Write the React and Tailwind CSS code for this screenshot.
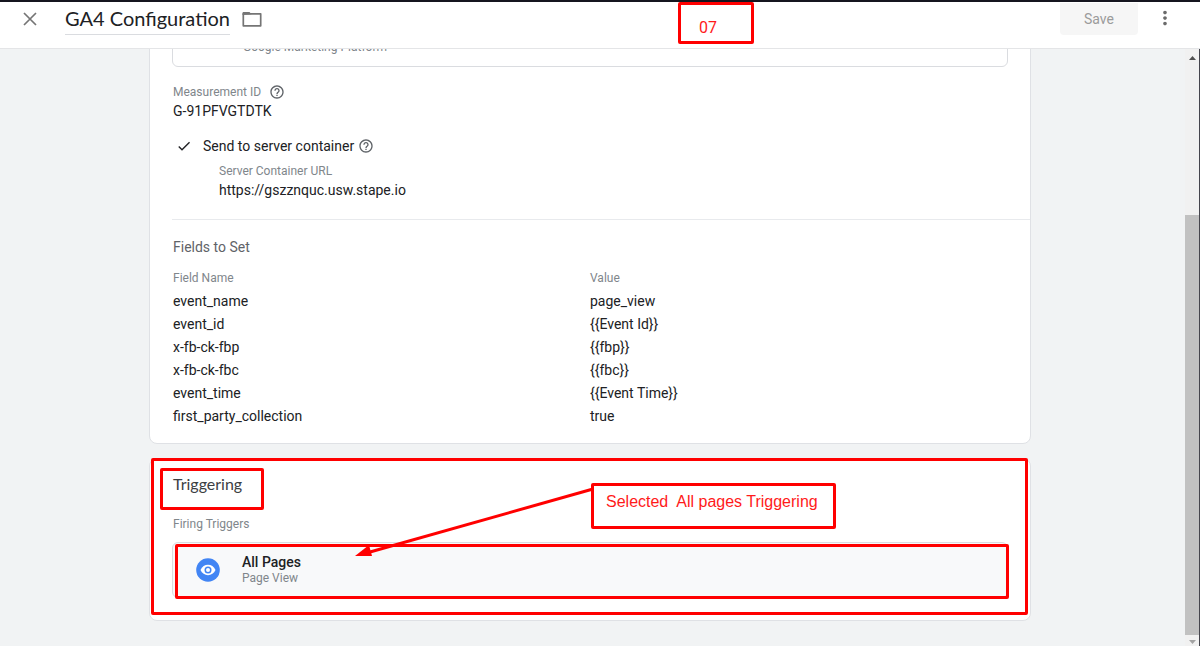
import { MdMoreVert, MdHelpOutline, MdCheck } from 'react-icons/md';

const fields = [
  { name: 'event_name', value: 'page_view' },
  { name: 'event_id', value: '{{Event Id}}' },
  { name: 'x-fb-ck-fbp', value: '{{fbp}}' },
  { name: 'x-fb-ck-fbc', value: '{{fbc}}' },
  { name: 'event_time', value: '{{Event Time}}' },
  { name: 'first_party_collection', value: 'true' },
];

const Header = () => (
  <header className="h-[49px] shrink-0 flex items-start bg-white border-t-2 border-t-[#15151f] border-b border-b-[#e4e5e7]">
    <button aria-label="Close" className="ml-5 mt-[7px] text-[#757575]">
      <svg viewBox="0 0 20 20" className="w-5 h-5" fill="none" stroke="currentColor" strokeWidth="1.700">
        <path d="M4 4l12 12M16 4L4 16" />
      </svg>
    </button>
    <h1 className="ml-[25px] h-[33px] leading-8 border-b border-[#dadce0] text-[20px] text-[#202124] font-['Lato',sans-serif]">GA4 Configuration</h1>
    <button aria-label="Move to folder" className="ml-[10px] mt-[6px] text-[#757575]">
      <svg viewBox="0 0 24 22" className="w-6 h-[22px]" fill="none" stroke="currentColor" strokeWidth="1.700">
        <path d="M3.300 5.800h17.400v12H3.300z" strokeLinejoin="round" />
        <path d="M2.500 7V5.200c0-.8.500-1.200 1.200-1.200H9.500l2 2.200z" fill="currentColor" stroke="none" />
      </svg>
    </button>
    <div className="flex-1" />
    <button className="w-[78px] h-8 mt-px rounded-b bg-[#f6f6f6] text-sm text-[#9b9b9b]">Save</button>
    <button aria-label="More options" className="ml-4 mr-6 mt-[5px] text-[#6b6b6b]">
      <MdMoreVert size={22} />
    </button>
  </header>
);

const Scrollbar = () => (
  <div className="w-[15px] shrink-0 flex flex-col items-center bg-[#f1f1f1] border-r border-[#45454d]">
    <svg viewBox="0 0 14 17" className="w-[14px] h-[17px] shrink-0"><path d="M4 11h7L7.500 7z" fill="#505050" /></svg>
    <div className="flex-[149]" />
    <div className="flex-[420] w-full bg-[#c1c1c1]" />
    <svg viewBox="0 0 14 11" className="w-[14px] h-[11px] shrink-0"><path d="M4 5h7l-3.500 4z" fill="#a3a3a3" /></svg>
  </div>
);

const Help = () => (
  <button aria-label="Help" className="text-[#5f6368]"><MdHelpOutline size={16} /></button>
);

const TagCard = () => (
  <section className="shrink-0 bg-white border border-[#dfe1e5] rounded-lg pl-[22px] pb-4">
    <div className="mr-[22px] border border-[#dadce0] rounded-md pl-[70px] pt-10 pb-[11px]">
      <p className="text-xs leading-4 text-[#80868b]">Google Marketing Platform</p>
    </div>

    <div className="pl-px">
      <div className="pt-4 flex items-center gap-2 text-xs leading-[18px] text-[#80868b]">
        Measurement ID <Help />
      </div>
      <p className="text-sm leading-5">G-91PFVGTDTK</p>

      <div className="mt-[15px] pl-[3px] flex items-center text-sm leading-5">
        <MdCheck size={16} className="mr-[11px]" />
        <span className="mr-1">Send to server container</span>
        <Help />
      </div>
      <div className="pl-[46px] mt-[6px]">
        <p className="text-xs leading-[18px] text-[#80868b]">Server Container URL</p>
        <p className="text-sm leading-5">https://gszznquc.usw.stape.io</p>
      </div>
    </div>

    <div className="mt-[19px] border-t border-[#e8eaed]" />
    <div className="pl-px">
      <h2 className="mt-[17px] text-sm leading-5 text-[#5f6368]">Fields to Set</h2>
      <table className="mt-[11px] w-full table-fixed text-left">
        <thead>
          <tr className="text-xs leading-5 text-[#80868b]">
            <th className="w-[417px] pb-px font-normal">Field Name</th>
            <th className="pb-px font-normal">Value</th>
          </tr>
        </thead>
        <tbody>
          {fields.map((f) => (
            <tr key={f.name} className="h-[23px] text-sm leading-5">
              <td>{f.name}</td>
              <td>{f.value}</td>
            </tr>
          ))}
        </tbody>
      </table>
    </div>
  </section>
);

const TriggerCard = () => (
  <section className="relative shrink-0 bg-white border border-[#dfe1e5] rounded-lg px-[22px] pb-[22px]">
    <h2 className="mt-[14px] pl-px text-[16px] leading-[22px] text-[#3c4043] font-['Lato',sans-serif]">Triggering</h2>
    <p className="mt-5 pl-px text-xs leading-[18px] text-[#80868b]">Firing Triggers</p>
    <div className="relative mt-[9px] h-[56px] flex items-center bg-[#f8f9fa] border border-[#dadce0] rounded-md pl-[23px]">
      <svg viewBox="0 0 24 24" className="w-6 h-6 mr-[22px]">
        <circle cx="12" cy="12" r="11.800" fill="#4285f4" />
        <path d="M4.500 12C6 8.700 8.800 6.800 12 6.800s6 1.900 7.500 5.200c-1.500 3.300-4.300 5.200-7.500 5.200S6 15.300 4.500 12z" fill="#fff" />
        <circle cx="12" cy="12" r="3.500" fill="#4285f4" />
        <circle cx="12" cy="12" r="2" fill="#fff" />
      </svg>
      <div>
        <p className="text-sm leading-4 font-medium text-[#202124]">All Pages</p>
        <p className="text-xs leading-4 text-[#80868b]">Page View</p>
      </div>
      <div className="absolute top-px -bottom-[2px] left-[2px] -right-[2px] border-3 border-[#ff0000] rounded-xs" />
    </div>

    {/* red markup */}
    <div className="absolute -top-px bottom-[5px] left-px right-[2px] border-3 border-[#ff0000] rounded-xs" />
    <div className="absolute top-[9px] left-[10px] w-[104px] h-[42px] border-3 border-[#ff0000] rounded-xs" />
    <svg viewBox="0 0 240 72" className="absolute top-[28px] left-[204px] w-[240px] h-[72px]">
      <path d="M239 2L16 65" stroke="#ff0000" strokeWidth="3" />
      <path d="M1 69l14-11 3 11z" fill="#ff0000" />
    </svg>
    <div className="absolute top-[24px] left-[441px] w-[245px] h-[46px] border-3 border-[#ff0000] rounded-xs pl-3 pt-1 whitespace-pre text-[16px] leading-6 text-[#ff1a1a] font-['Liberation_Sans',sans-serif]">
      {'Selected  All pages Triggering'}
    </div>
  </section>
);

const App = () => (
  <div className="relative h-screen flex flex-col bg-[#f1f3f4] text-[#202124] font-['Roboto',sans-serif]">
    <Header />
    <div className="flex-1 min-h-0 flex">
      <main className="flex-1 min-w-0 overflow-hidden flex flex-col justify-end gap-[14px] pl-[149px] pr-[154px] pb-[25px]">
        <TagCard />
        <TriggerCard />
      </main>
      <Scrollbar />
    </div>
    <div className="absolute top-[2px] left-[678px] w-[76px] h-[42px] border-3 border-[#ff0000] rounded-xs pl-[18px] pt-[11px] text-[16px] leading-6 text-[#ff1a1a]">07</div>
  </div>
);

export default App;
